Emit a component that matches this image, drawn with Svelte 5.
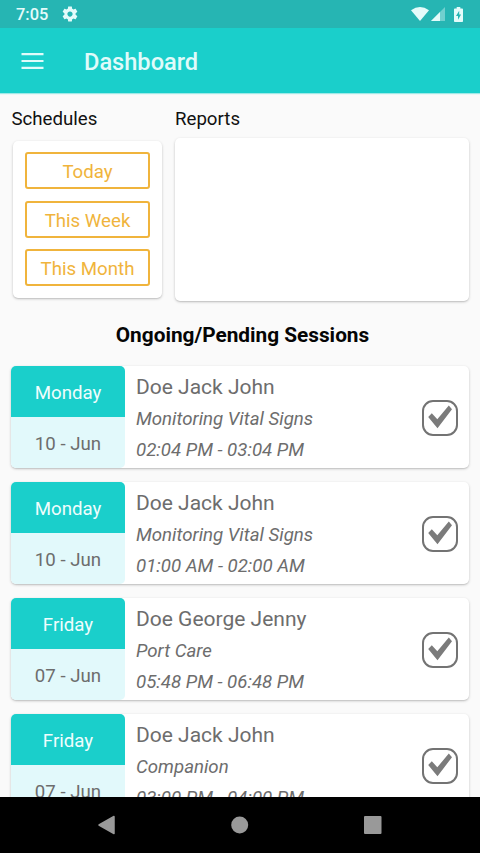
<script lang="ts">
  type Session = {
    day: string;
    date: string;
    patient: string;
    service: string;
    time: string;
    done: boolean;
  };

  const ranges: string[] = ["Today", "This Week", "This Month"];
  let selectedRange: string = $state("");

  let sessions: Session[] = $state([
    {
      day: "Monday",
      date: "10 - Jun",
      patient: "Doe Jack John",
      service: "Monitoring Vital Signs",
      time: "02:04 PM - 03:04 PM",
      done: true,
    },
    {
      day: "Monday",
      date: "10 - Jun",
      patient: "Doe Jack John",
      service: "Monitoring Vital Signs",
      time: "01:00 AM - 02:00 AM",
      done: true,
    },
    {
      day: "Friday",
      date: "07 - Jun",
      patient: "Doe George Jenny",
      service: "Port Care",
      time: "05:48 PM - 06:48 PM",
      done: true,
    },
    {
      day: "Friday",
      date: "07 - Jun",
      patient: "Doe Jack John",
      service: "Companion",
      time: "03:00 PM - 04:00 PM",
      done: true,
    },
  ]);
</script>

<div class="screen">
  <div class="status-bar">
    <span class="clock">7:05</span>
    <svg class="gear" width="18" height="18" viewBox="0 0 24 24">
      <path
        d="M19.43 12.98c.04-.32.07-.64.07-.98s-.03-.66-.07-.98l2.11-1.65c.19-.15.24-.42.12-.64l-2-3.46c-.12-.22-.39-.3-.61-.22l-2.49 1c-.52-.4-1.08-.73-1.69-.98l-.38-2.65C14.46 2.18 14.25 2 14 2h-4c-.25 0-.46.18-.49.42l-.38 2.65c-.61.25-1.17.59-1.69.98l-2.49-1c-.23-.09-.49 0-.61.22l-2 3.46c-.13.22-.07.49.12.64l2.11 1.65c-.04.32-.07.65-.07.98s.03.66.07.98l-2.11 1.65c-.19.15-.24.42-.12.64l2 3.46c.12.22.39.3.61.22l2.49-1c.52.4 1.08.73 1.69.98l.38 2.65c.03.24.24.42.49.42h4c.25 0 .46-.18.49-.42l.38-2.65c.61-.25 1.17-.59 1.69-.98l2.49 1c.23.09.49 0 .61-.22l2-3.46c.12-.22.07-.49-.12-.64l-2.11-1.65zM12 15.5c-1.93 0-3.5-1.57-3.5-3.5s1.57-3.5 3.5-3.5 3.5 1.57 3.5 3.5-1.57 3.5-3.5 3.5z"
      />
    </svg>
    <div class="indicators">
      <svg width="18" height="14" viewBox="0 0 18 14">
        <path d="M0 3.2Q9-3.2 18 3.2L9 14z" />
      </svg>
      <svg class="signal" width="14" height="14" viewBox="0 0 14 14">
        <path class="faint" d="M14 0V14H0z" />
        <path d="M9 5V14H0z" />
      </svg>
      <svg class="battery" width="9" height="15" viewBox="0 0 9 15">
        <path
          fill-rule="evenodd"
          d="M2.7 0h3.6v1.6h1.9q.8 0 .8.8v11.8q0 .8-.8.8H.8q-.8 0-.8-.8V2.4q0-.8.8-.8h1.9zM5.2 3.8L2 9h2v3.8L7.1 7.6H5.2z"
        />
      </svg>
    </div>
  </div>

  <header>
    <button class="menu" aria-label="Open menu">
      <svg width="23" height="16" viewBox="0 0 23 16">
        <path d="M.5 1.2h22M.5 8h22M.5 14.8h22" />
      </svg>
    </button>
    <h1>Dashboard</h1>
  </header>

  <main>
    <div class="overview">
      <section class="schedules">
        <h2>Schedules</h2>
        <div class="card range-list">
          {#each ranges as range}
            <button class="range" onclick={() => (selectedRange = range)}
              >{range}</button
            >
          {/each}
        </div>
      </section>
      <section class="reports">
        <h2>Reports</h2>
        <div class="card report"></div>
      </section>
    </div>

    <h3>Ongoing/Pending Sessions</h3>

    <ul>
      {#each sessions as session}
        <li class="card session">
          <div class="date-box">
            <div class="day">{session.day}</div>
            <div class="date">{session.date}</div>
          </div>
          <div class="details">
            <p class="patient">{session.patient}</p>
            <p class="service">{session.service}</p>
            <p class="time">{session.time}</p>
          </div>
          <button
            class="check"
            aria-label="Toggle session"
            onclick={() => (session.done = !session.done)}
          >
            <svg width="36" height="36" viewBox="0 0 36 36">
              <rect x="1" y="1" width="34" height="34" rx="10" />
              {#if session.done}
                <path d="M6.2 17L9.8 13.2L15.3 19.3L26.8 5.5L30 9.2L15.5 28.3z" />
              {/if}
            </svg>
          </button>
        </li>
      {/each}
    </ul>
  </main>

  <nav>
    <button aria-label="Back">
      <svg width="18" height="20" viewBox="0 0 18 20">
        <path d="M1 10L16 1.5V18.5z" stroke-width="1.5" stroke-linejoin="round" />
      </svg>
    </button>
    <button aria-label="Home">
      <svg width="18" height="18" viewBox="0 0 18 18">
        <circle cx="8.7" cy="9" r="8.5" />
      </svg>
    </button>
    <button aria-label="Recent apps">
      <svg width="18" height="18" viewBox="0 0 18 18">
        <rect width="17.5" height="18" rx="1" />
      </svg>
    </button>
  </nav>
</div>

<style>
  :global(body) {
    margin: 0;
  }

  .screen {
    width: 480px;
    height: 853px;
    display: flex;
    flex-direction: column;
    overflow: hidden;
    background: #fafafa;
    font-family: Roboto, "Liberation Sans", sans-serif;
    font-size: 18.67px;
    color: #6d6d6d;
  }

  h1,
  h2,
  h3,
  p,
  ul {
    margin: 0;
    padding: 0;
  }

  button {
    padding: 0;
    border: none;
    background: none;
    font: inherit;
    cursor: pointer;
  }

  svg {
    display: block;
  }

  .status-bar {
    flex: none;
    height: 28px;
    display: flex;
    align-items: center;
    padding: 0 17px 0 16px;
    box-sizing: border-box;
    background: #26b5b3;
    color: #e4fbfa;
    fill: #e4fbfa;
  }

  .clock {
    font-size: 16.4px;
    font-weight: 500;
    line-height: 28px;
    padding-top: 2px;
  }

  .gear {
    margin-left: 13px;
  }

  .indicators {
    display: flex;
    align-items: center;
    margin-left: auto;
  }

  .signal {
    margin-left: 2px;
  }

  .faint {
    opacity: 0.4;
  }

  .battery {
    margin-left: 9px;
  }

  header {
    flex: none;
    height: 65px;
    display: flex;
    align-items: center;
    padding: 1px 0 0 21px;
    box-sizing: border-box;
    background: #1acfcb;
    box-shadow: 0 1px 1px rgba(26, 207, 203, 0.4);
    z-index: 1;
  }

  .menu svg {
    stroke: #e0fbfa;
    stroke-width: 2.2;
  }

  h1 {
    margin-left: 40px;
    padding-top: 1px;
    font-size: 23.6px;
    font-weight: 500;
    color: #e0fbfa;
  }

  main {
    flex: 1;
    min-height: 0;
    overflow: hidden;
    padding: 14px 11px 0;
  }

  .overview {
    display: flex;
    gap: 13px;
  }

  h2 {
    font-size: 18.67px;
    font-weight: 400;
    line-height: 24px;
    color: #111;
  }

  .schedules {
    width: 151px;
  }

  .schedules h2 {
    padding-left: 0.5px;
  }

  .reports {
    flex: 1;
  }

  .card {
    background: #fff;
    border-radius: 5px;
    box-shadow:
      0 1px 3px rgba(0, 0, 0, 0.2),
      0 1px 1px rgba(0, 0, 0, 0.08);
  }

  .range-list {
    display: flex;
    flex-direction: column;
    gap: 11.5px;
    margin: 10px 0 0 2px;
    height: 157px;
    padding: 11px 12px 0;
    box-sizing: border-box;
  }

  .range {
    height: 37px;
    padding-top: 3px;
    border: 2px solid #f0b43c;
    border-radius: 3px;
    color: #f0b43c;
    line-height: 30px;
  }

  .report {
    height: 163.5px;
    margin-top: 6.5px;
  }

  h3 {
    margin-top: 20px;
    padding-left: 5px;
    line-height: 28px;
    text-align: center;
    font-size: 20.8px;
    font-weight: 700;
    color: #050505;
  }

  ul {
    display: flex;
    flex-direction: column;
    gap: 14px;
    margin-top: 17.4px;
    list-style: none;
  }

  .session {
    flex: none;
    height: 102px;
    display: flex;
    align-items: center;
  }

  .date-box {
    width: 114px;
    height: 100%;
    border-radius: 5px;
    overflow: hidden;
    text-align: center;
    background: #e2f9fb;
    line-height: 51px;
  }

  .day {
    height: 51px;
    padding-top: 2px;
    box-sizing: border-box;
    background: #1acfcb;
    color: #f0fdfd;
  }

  .date {
    padding-top: 2px;
  }

  .details {
    flex: 1;
    padding-left: 11px;
    line-height: 31px;
  }

  .patient {
    padding-top: 3px;
    font-size: 21px;
    line-height: 33px;
  }

  .service,
  .time {
    font-style: italic;
  }

  .check {
    margin: 1px 11px 0 0;
  }

  .check rect {
    fill: none;
    stroke: #737373;
    stroke-width: 2;
  }

  .check path {
    fill: #7b7b7b;
  }

  nav {
    flex: none;
    height: 56px;
    display: flex;
    align-items: center;
    justify-content: center;
    gap: 115px;
    background: #000;
    fill: #999;
    stroke: #999;
    stroke-width: 0;
  }
</style>
